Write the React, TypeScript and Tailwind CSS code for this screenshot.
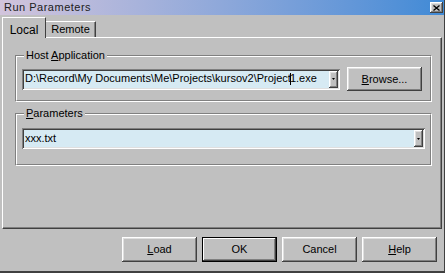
import React from 'react';

const raised =
  'shadow-[inset_-1px_-1px_#404040,inset_1px_1px_#ffffff,inset_-2px_-2px_#808080,inset_2px_2px_#dfdfdf]';
const sunken =
  'shadow-[inset_1px_1px_#808080,inset_-1px_-1px_#ffffff,inset_2px_2px_#404040,inset_-2px_-2px_#dfdfdf]';

function Combo({ children }: { children: React.ReactNode }) {
  return (
    <div className={`flex-1 h-[21px] bg-[#d6eaf3] flex items-center pl-[3px] pr-[2px] ${sunken}`}>
      <div className="flex-1 whitespace-nowrap overflow-hidden leading-none text-black">{children}</div>
      <div className={`w-[9px] h-[17px] bg-[#c0c0c0] flex items-center justify-center ${raised}`}>
        <svg width="3" height="2" viewBox="0 0 3 2">
          <path d="M0 0h3L1.5 2z" fill="#000" />
        </svg>
      </div>
    </div>
  );
}

function Group({
  label,
  children,
  className,
  pad,
}: {
  label: React.ReactNode;
  children: React.ReactNode;
  className?: string;
  pad: string;
}) {
  return (
    <div className={`relative border border-t-[#808080] border-l-[#808080] border-b-white border-r-white ${className ?? ''}`}>
      <div className={`border border-t-white border-l-white border-b-[#808080] border-r-[#808080] px-[5px] ${pad}`}>
        {children}
      </div>
      <span className="absolute left-[8px] -top-[8px] bg-[#c0c0c0] px-[2px] leading-[14px] text-black">{label}</span>
    </div>
  );
}

function Button({ children, isDefault, h = 'h-[25px]' }: { children: React.ReactNode; isDefault?: boolean; h?: string }) {
  return (
    <button
      className={`w-[75px] ${h} bg-[#c0c0c0] text-black flex items-center justify-center ${
        isDefault
          ? 'border border-black shadow-[inset_-1px_-1px_#404040,inset_1px_1px_#ffffff,inset_-2px_-2px_#808080]'
          : raised
      }`}
    >
      {children}
    </button>
  );
}

export default function App() {
  return (
    <div
      className="w-[445px] h-[273px] bg-[#c0c0c0] flex flex-col text-[11px] overflow-hidden border-r border-r-[#404040]"
      style={{ fontFamily: '"Liberation Sans", Arial, sans-serif' }}
    >
      {/* title bar */}
      <div className="h-[15px] flex items-center justify-between pl-[4px] pr-[1px] bg-gradient-to-r from-[#d2c4dc] via-[#8ea8da] to-[#3f8ad6]">
        <span className="text-[#202020] tracking-[0.5px] leading-none">Run Parameters</span>
        <div className={`w-[13px] h-[11px] bg-[#c0c0c0] flex items-center justify-center ${raised}`}>
          <svg width="7" height="6" viewBox="0 0 7 6">
            <path d="M0.5 0.5l6 5M6.5 0.5l-6 5" stroke="#000" strokeWidth="1.3" />
          </svg>
        </div>
      </div>

      {/* tabs */}
      <div className="h-[22px] flex items-end pl-[2px]">
        <div className="relative z-10 -mb-px w-[44px] h-[21px] bg-[#c0c0c0] border-t border-l border-r border-t-white border-l-white border-r-[#404040] flex items-start justify-center pt-[3px] text-[12px] text-black">
          Local
        </div>
        <div className="w-[50px] h-[16px] bg-[#c0c0c0] border-t border-r border-t-white border-r-[#404040] shadow-[inset_-1px_0_#808080] flex items-center justify-center text-[11px] text-black">
          Remote
        </div>
      </div>

      {/* panel */}
      <div className="ml-[2px] mr-[2px] h-[192px] border border-t-white border-l-white border-r-[#404040] border-b-[#404040] shadow-[inset_-1px_-1px_#808080] pl-[12px] pr-[9px] pt-[17px]">
        <Group
          pad="pt-[10px] pb-[9px]"
          label={
            <>
              Host <u>A</u>pplication
            </>
          }
        >
          <div className="flex items-center gap-[7px] pr-[3px]">
            <Combo>
              D:\Record\My Documents\Me\Projects\kursov2\Project
              <span className="inline-block w-px h-[12px] bg-black align-middle -mx-px" />
              1.exe
            </Combo>
            <Button h="h-[24px]">
              <u>B</u>rowse...
            </Button>
          </div>
        </Group>

        <Group
          className="mt-[11px]"
          pad="pt-[13px] pb-[15px]"
          label={
            <>
              <u>P</u>arameters
            </>
          }
        >
          <div className="flex items-center">
            <Combo>xxx.txt</Combo>
          </div>
        </Group>
      </div>

      {/* buttons */}
      <div className="flex-1 flex items-start justify-end gap-[5px] pt-[8px] pr-[7px] border-b-2 border-b-[#404040]">
        <Button>
          <u>L</u>oad
        </Button>
        <Button isDefault>OK</Button>
        <Button>Cancel</Button>
        <Button>
          <u>H</u>elp
        </Button>
      </div>
    </div>
  );
}
